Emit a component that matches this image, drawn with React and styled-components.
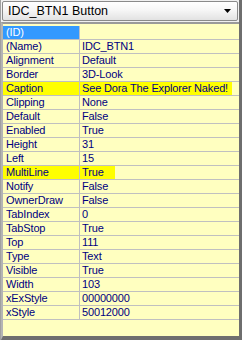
import React from "react";
import styled, { createGlobalStyle } from "styled-components";

const GlobalStyle = createGlobalStyle`
  html, body {
    margin: 0;
    padding: 0;
    background: #f0f0f0;
  }
  * {
    box-sizing: border-box;
  }
`;

const Panel = styled.div`
  width: 242px;
  height: 340px;
  display: flex;
  flex-direction: column;
  gap: 1px;
  background: #f0f0f0;
  border-left: 1px solid #a0a0a0;
  border-right: 3px solid #6e6e6e;
  font-family: "Liberation Sans", Arial, sans-serif;
`;

const Combo = styled.div`
  height: 20px;
  margin: 1px 1px 0 1px;
  padding: 0 6px 0 5px;
  display: flex;
  align-items: center;
  justify-content: space-between;
  border: 1px solid #8a8a8a;
  border-radius: 2px;
  background: linear-gradient(to bottom, #ffffff 0%, #f6f6f6 45%, #e2e2e2 100%);
  font-size: 12.5px;
  color: #000;
`;

const Grid = styled.div`
  flex: 1;
  display: flex;
  flex-direction: column;
  background: #ffffc0;
  border-top: 2px solid #9a9a9a;
  border-left: 2px solid #b4b4b4;
  border-bottom: 4px solid #6e6e6e;
  padding-top: 2px;
  font-size: 11px;
  letter-spacing: -0.15px;
  color: #000080;
`;

const Row = styled.div`
  display: grid;
  grid-template-columns: 76px 1px 1fr;
  height: 14px;
  border-bottom: 1px solid #c0c0c0;
  line-height: 13px;
`;

const Name = styled.div`
  padding-left: 3px;
  white-space: nowrap;
  overflow: hidden;
  background: ${(p) => (p.$selected ? "#3399ff" : p.$mark ? "#ffff00" : "transparent")};
  color: ${(p) => (p.$selected ? "#ffffff" : "inherit")};
`;

const Divider = styled.div`
  background: #c0c0c0;
`;

const Value = styled.div`
  padding-left: 2px;
  white-space: nowrap;
  overflow: hidden;
  background: ${(p) =>
    p.$mark ? `linear-gradient(to right, #ffff00 ${p.$mark}px, transparent ${p.$mark}px)` : "transparent"};
`;

const Arrow = () => (
  <svg width="7" height="4" viewBox="0 0 7 4">
    <polygon points="0,0 7,0 3.5,4" fill="#000" />
  </svg>
);

const props = [
  ["(ID)", "", { selected: true }],
  ["(Name)", "IDC_BTN1"],
  ["Alignment", "Default"],
  ["Border", "3D-Look"],
  ["Caption", "See Dora The Explorer Naked!", { mark: 152 }],
  ["Clipping", "None"],
  ["Default", "False"],
  ["Enabled", "True"],
  ["Height", "31"],
  ["Left", "15"],
  ["MultiLine", "True", { mark: 35 }],
  ["Notify", "False"],
  ["OwnerDraw", "False"],
  ["TabIndex", "0"],
  ["TabStop", "True"],
  ["Top", "111"],
  ["Type", "Text"],
  ["Visible", "True"],
  ["Width", "103"],
  ["xExStyle", "00000000"],
  ["xStyle", "50012000"],
];

export default function App() {
  return (
    <>
      <GlobalStyle />
      <Panel>
        <Combo>
          <span>IDC_BTN1 Button</span>
          <Arrow />
        </Combo>
        <Grid>
          {props.map(([name, value, opts = {}]) => (
            <Row key={name}>
              <Name $selected={opts.selected} $mark={opts.mark}>
                {name}
              </Name>
              <Divider />
              <Value $mark={opts.mark}>{value}</Value>
            </Row>
          ))}
        </Grid>
      </Panel>
    </>
  );
}
